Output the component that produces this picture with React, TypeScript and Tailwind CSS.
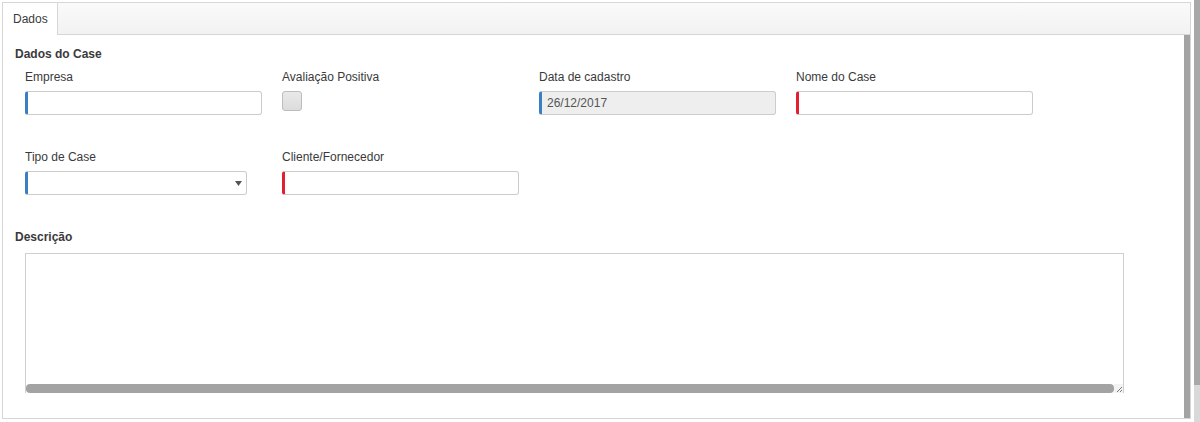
import React from 'react';

type Accent = 'blue' | 'red';

function TextField({ accent, value, disabled }: { accent: Accent; value?: string; disabled?: boolean }) {
  return (
    <div
      className={
        'h-[24px] w-[237px] rounded-[3px] border border-[#cccccc] border-l-[3px] flex items-center pl-[5px] text-[#555] ' +
        (accent === 'blue' ? 'border-l-[#3a7fc1] ' : 'border-l-[#e0202e] ') +
        (disabled ? 'bg-[#eeeeee]' : 'bg-white')
      }
    >
      {value}
    </div>
  );
}

function Label({ children }: { children: React.ReactNode }) {
  return <div className="h-[16px] leading-[16px] mb-[6px]">{children}</div>;
}

export default function App() {
  return (
    <div className="flex h-[422px] w-[1200px] bg-white font-['Liberation_Sans',Arial,sans-serif] text-[12px] text-[#3a3a3a]">
      {/* Panel */}
      <div className="ml-[2px] mt-[2px] flex h-[417px] w-[1189px] flex-col border border-[#d6d6d6]">
        {/* Tab bar */}
        <div className="flex h-[32px] shrink-0 border-b border-[#d6d6d6] bg-gradient-to-b from-[#fafafa] to-[#f2f2f2]">
          <div className="-mb-px flex w-[55px] items-center border-r border-[#d6d6d6] bg-white pl-[10px] pb-[1px]">
            Dados
          </div>
        </div>

        {/* Content */}
        <div className="flex flex-1">
          <div className="flex-1 pl-[12px]">
            <div className="mt-[11px] h-[16px] font-bold leading-[16px]">Dados do Case</div>

            <div className="ml-[10px] mt-[7px] flex gap-[20px]">
              <div>
                <Label>Empresa</Label>
                <TextField accent="blue" />
              </div>
              <div className="w-[237px]">
                <Label>Avaliação Positiva</Label>
                <div className="mt-[2px] h-[20px] w-[20px] rounded-[3px] border border-[#bdbdbd] bg-gradient-to-b from-[#e9e9e9] to-[#dcdcdc]" />
              </div>
              <div>
                <Label>Data de cadastro</Label>
                <TextField accent="blue" value="26/12/2017" disabled />
              </div>
              <div>
                <Label>Nome do Case</Label>
                <TextField accent="red" />
              </div>
            </div>

            <div className="ml-[10px] mt-[34px] flex gap-[20px]">
              <div className="w-[237px]">
                <Label>Tipo de Case</Label>
                <div className="flex h-[24px] w-[222px] items-center justify-end rounded-[3px] border border-[#cccccc] border-l-[3px] border-l-[#3a7fc1] bg-white pr-[4px]">
                  <svg width="7" height="5" viewBox="0 0 7 5">
                    <path d="M0 0 L7 0 L3.5 5 Z" fill="#555" />
                  </svg>
                </div>
              </div>
              <div>
                <Label>Cliente/Fornecedor</Label>
                <TextField accent="red" />
              </div>
            </div>

            <div className="mt-[34px] h-[16px] font-bold leading-[16px]">Descrição</div>

            <div className="ml-[10px] mt-[8px] flex h-[140px] w-[1099px] flex-col border border-[#cfcfcf] border-b-0 bg-white">
              <div className="flex-1" />
              <div className="flex h-[9px] items-stretch">
                <div className="flex-1 rounded-[4px] bg-[#a3a3a3]" />
                <div className="flex w-[9px] items-end justify-end bg-[#f3f3f3]">
                  <svg width="7" height="7" viewBox="0 0 7 7">
                    <path d="M6 1 L1 6 M6 4 L4 6" stroke="#777" strokeWidth="1" />
                  </svg>
                </div>
              </div>
            </div>
          </div>
          {/* Inner scrollbar */}
          <div className="w-[6px] bg-[#a3a3a3]" />
        </div>
      </div>

      {/* Page scrollbar */}
      <div className="ml-[3px] flex w-[6px] flex-col">
        <div className="h-[385px] bg-[#a8a8a8]" />
        <div className="flex-1 bg-[#d9d9d9]" />
      </div>
    </div>
  );
}
